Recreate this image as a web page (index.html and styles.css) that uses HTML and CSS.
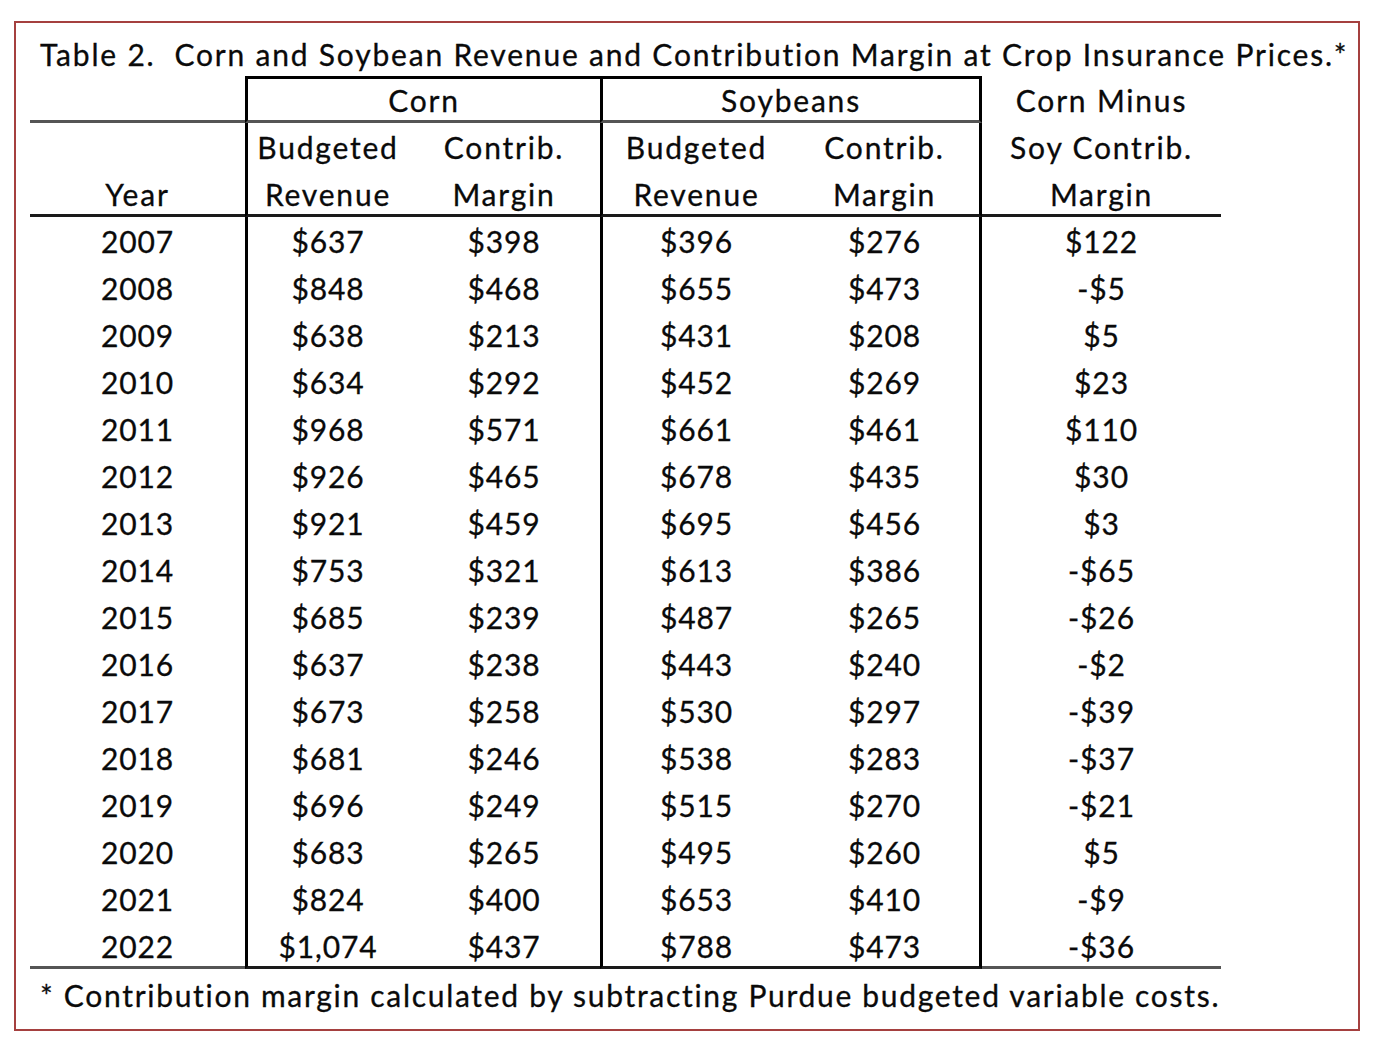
FILE: index.html
```html
<!DOCTYPE html>
<html lang="en">
<head>
<meta charset="utf-8">
<title>Table 2</title>
<link rel="stylesheet" href="styles.css">
</head>
<body>
<div class="frame">
  <div class="title">Table 2.&nbsp; Corn and Soybean Revenue and Contribution Margin at Crop Insurance Prices.*</div>
  <div class="tbl">
    <div class="c hl"></div>
    <div class="c span2 bl bt hl">Corn</div>
    <div class="c span2 bl br bt hl">Soybeans</div>
    <div class="c">Corn Minus</div>

    <div class="c"></div>
    <div class="c bl">Budgeted</div>
    <div class="c">Contrib.</div>
    <div class="c bl">Budgeted</div>
    <div class="c br">Contrib.</div>
    <div class="c">Soy Contrib.</div>

    <div class="c hk">Year</div>
    <div class="c bl hk">Revenue</div>
    <div class="c hk">Margin</div>
    <div class="c bl hk">Revenue</div>
    <div class="c br hk">Margin</div>
    <div class="c hk">Margin</div>

    <div class="c n">2007</div><div class="c n bl">$637</div><div class="c n">$398</div><div class="c n bl">$396</div><div class="c n br">$276</div><div class="c n">$122</div>
    <div class="c n">2008</div><div class="c n bl">$848</div><div class="c n">$468</div><div class="c n bl">$655</div><div class="c n br">$473</div><div class="c n">-$5</div>
    <div class="c n">2009</div><div class="c n bl">$638</div><div class="c n">$213</div><div class="c n bl">$431</div><div class="c n br">$208</div><div class="c n">$5</div>
    <div class="c n">2010</div><div class="c n bl">$634</div><div class="c n">$292</div><div class="c n bl">$452</div><div class="c n br">$269</div><div class="c n">$23</div>
    <div class="c n">2011</div><div class="c n bl">$968</div><div class="c n">$571</div><div class="c n bl">$661</div><div class="c n br">$461</div><div class="c n">$110</div>
    <div class="c n">2012</div><div class="c n bl">$926</div><div class="c n">$465</div><div class="c n bl">$678</div><div class="c n br">$435</div><div class="c n">$30</div>
    <div class="c n">2013</div><div class="c n bl">$921</div><div class="c n">$459</div><div class="c n bl">$695</div><div class="c n br">$456</div><div class="c n">$3</div>
    <div class="c n">2014</div><div class="c n bl">$753</div><div class="c n">$321</div><div class="c n bl">$613</div><div class="c n br">$386</div><div class="c n">-$65</div>
    <div class="c n">2015</div><div class="c n bl">$685</div><div class="c n">$239</div><div class="c n bl">$487</div><div class="c n br">$265</div><div class="c n">-$26</div>
    <div class="c n">2016</div><div class="c n bl">$637</div><div class="c n">$238</div><div class="c n bl">$443</div><div class="c n br">$240</div><div class="c n">-$2</div>
    <div class="c n">2017</div><div class="c n bl">$673</div><div class="c n">$258</div><div class="c n bl">$530</div><div class="c n br">$297</div><div class="c n">-$39</div>
    <div class="c n">2018</div><div class="c n bl">$681</div><div class="c n">$246</div><div class="c n bl">$538</div><div class="c n br">$283</div><div class="c n">-$37</div>
    <div class="c n">2019</div><div class="c n bl">$696</div><div class="c n">$249</div><div class="c n bl">$515</div><div class="c n br">$270</div><div class="c n">-$21</div>
    <div class="c n">2020</div><div class="c n bl">$683</div><div class="c n">$265</div><div class="c n bl">$495</div><div class="c n br">$260</div><div class="c n">$5</div>
    <div class="c n">2021</div><div class="c n bl">$824</div><div class="c n">$400</div><div class="c n bl">$653</div><div class="c n br">$410</div><div class="c n">-$9</div>
    <div class="c n hl">2022</div><div class="c n bl hk">$1,074</div><div class="c n hk">$437</div><div class="c n bl hk">$788</div><div class="c n br hk">$473</div><div class="c n hl">-$36</div>
  </div>
  <div class="note">* Contribution margin calculated by subtracting Purdue budgeted variable costs.</div>
</div>
</body>
</html>
```
FILE: styles.css
```css
html, body {
  margin: 0;
  padding: 0;
  background: #ffffff;
}

body {
  font-family: Lato, "Liberation Sans", sans-serif;
  font-size: 30px;
  color: #0a0a0a;
  letter-spacing: 1.8px;
  -webkit-text-stroke: 0.3px #0a0a0a;
}

.frame {
  box-sizing: border-box;
  width: 1346px;
  height: 1010px;
  margin: 21px 0 0 14px;
  border: 2px solid #a5403f;
}

.title {
  padding: 11px 0 2px 24px;
  line-height: 40px;
  height: 40px;
  white-space: nowrap;
}

.tbl {
  display: grid;
  grid-template-columns: 215px 163px 192px 190px 192px 239px;
  grid-auto-rows: 47px;
  margin-left: 14px;
  width: 1191px;
}

.c {
  box-sizing: border-box;
  display: flex;
  align-items: center;
  justify-content: center;
  white-space: nowrap;
  line-height: 1;
}

.n {
  letter-spacing: 0.9px;
}

.span2 {
  grid-column: span 2;
}

.bl {
  border-left: 3px solid #000000;
}

.br {
  border-right: 3px solid #000000;
}

.bt {
  border-top: 3px solid #000000;
}

.hl {
  border-bottom: 3px solid #555555;
  padding-top: 3px;
}

.hk {
  border-bottom: 3px solid #1a1a1a;
  padding-top: 3px;
}

.bt.hl {
  padding-top: 0;
}

.note {
  padding: 3px 0 0 24px;
  line-height: 47px;
  white-space: nowrap;
  letter-spacing: 1.7px;
}
```
